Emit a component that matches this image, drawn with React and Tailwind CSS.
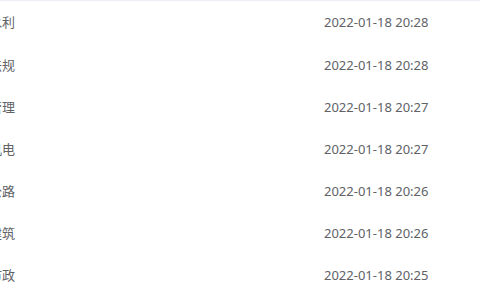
const rows = [
  { name: "水利", time: "2022-01-18 20:28" },
  { name: "法规", time: "2022-01-18 20:28" },
  { name: "管理", time: "2022-01-18 20:27" },
  { name: "机电", time: "2022-01-18 20:27" },
  { name: "公路", time: "2022-01-18 20:26" },
  { name: "建筑", time: "2022-01-18 20:26" },
  { name: "市政", time: "2022-01-18 20:25" },
];

export default function App() {
  return (
    <div
      className="w-[480px] h-[300px] overflow-hidden bg-white text-[13px] text-[#606266]"
      style={{ fontFamily: '"Noto Sans", "Noto Sans CJK SC", sans-serif' }}
    >
      <div className="border-t border-[#ebeef5] pt-px">
        {rows.map((r, i) => (
          <div key={i} className="flex items-center h-[42.2px]">
            <div className="w-[335px] -ml-[11px] shrink-0 whitespace-nowrap">{r.name}</div>
            <div className="whitespace-nowrap">{r.time}</div>
          </div>
        ))}
      </div>
    </div>
  );
}
